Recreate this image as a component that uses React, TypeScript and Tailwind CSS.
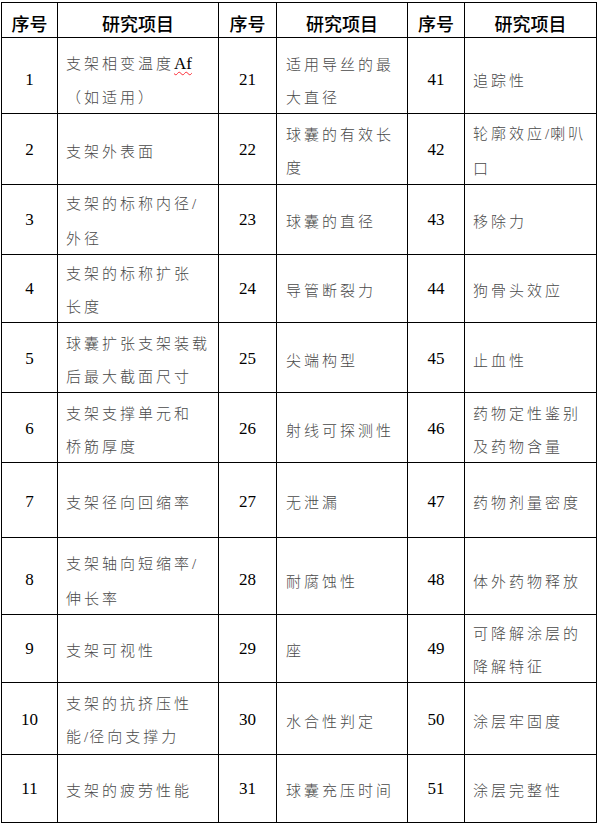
import React from "react";

type Item = { no: number; lines: React.ReactNode[] };
type Row = { h: string; cells: [Item, Item, Item] };

const cjk = "font-['Noto_Sans_CJK_SC',sans-serif]";
const cols = "grid grid-cols-[56px_161px_58px_131px_57px_132px]";

// narrow slash as in the source document
const S = () => <span className="font-['Liberation_Serif',serif] tracking-[1px]">/</span>;

const rows: Row[] = [
  {
    h: "h-[70px]",
    cells: [
      {
        no: 1,
        lines: [
          <>
            支架相变温度
            <span className="font-['Liberation_Serif',serif] text-[17px] tracking-normal text-black underline decoration-wavy decoration-red-500 decoration-1 underline-offset-2">
              Af
            </span>
          </>,
          "（如适用）",
        ],
      },
      { no: 21, lines: ["适用导丝的最", "大直径"] },
      { no: 41, lines: ["追踪性"] },
    ],
  },
  {
    h: "h-[70px]",
    cells: [
      { no: 2, lines: ["支架外表面"] },
      { no: 22, lines: ["球囊的有效长", "度"] },
      { no: 42, lines: [<>轮廓效应<S />喇叭</>, "口"] },
    ],
  },
  {
    h: "h-[70px]",
    cells: [
      { no: 3, lines: [<>支架的标称内径<S /></>, "外径"] },
      { no: 23, lines: ["球囊的直径"] },
      { no: 43, lines: ["移除力"] },
    ],
  },
  {
    h: "h-[70px]",
    cells: [
      { no: 4, lines: ["支架的标称扩张", "长度"] },
      { no: 24, lines: ["导管断裂力"] },
      { no: 44, lines: ["狗骨头效应"] },
    ],
  },
  {
    h: "h-[70px]",
    cells: [
      { no: 5, lines: ["球囊扩张支架装载", "后最大截面尺寸"] },
      { no: 25, lines: ["尖端构型"] },
      { no: 45, lines: ["止血性"] },
    ],
  },
  {
    h: "h-[70px]",
    cells: [
      { no: 6, lines: ["支架支撑单元和", "桥筋厚度"] },
      { no: 26, lines: ["射线可探测性"] },
      { no: 46, lines: ["药物定性鉴别", "及药物含量"] },
    ],
  },
  {
    h: "h-[80px]",
    cells: [
      { no: 7, lines: ["支架径向回缩率"] },
      { no: 27, lines: ["无泄漏"] },
      { no: 47, lines: ["药物剂量密度"] },
    ],
  },
  {
    h: "h-[70px]",
    cells: [
      { no: 8, lines: [<>支架轴向短缩率<S /></>, "伸长率"] },
      { no: 28, lines: ["耐腐蚀性"] },
      { no: 48, lines: ["体外药物释放"] },
    ],
  },
  {
    h: "h-[70px]",
    cells: [
      { no: 9, lines: ["支架可视性"] },
      { no: 29, lines: ["座"] },
      { no: 49, lines: ["可降解涂层的", "降解特征"] },
    ],
  },
  {
    h: "h-[70px]",
    cells: [
      { no: 10, lines: ["支架的抗挤压性", <>能<S />径向支撑力</>] },
      { no: 30, lines: ["水合性判定"] },
      { no: 50, lines: ["涂层牢固度"] },
    ],
  },
  {
    h: "h-[75px]",
    cells: [
      { no: 11, lines: ["支架的疲劳性能"] },
      { no: 31, lines: ["球囊充压时间"] },
      { no: 51, lines: ["涂层完整性"] },
    ],
  },
];

function NoCell({ n }: { n: number }) {
  return (
    <div className="border-r border-b border-black flex items-center justify-center pt-[8px] font-['Liberation_Serif',serif] text-[17px] text-black">
      {n}
    </div>
  );
}

function TextCell({ lines, pl }: { lines: React.ReactNode[]; pl: string }) {
  return (
    <div className={`border-r border-b border-black flex flex-col justify-center pt-[8px] ${pl} ${cjk} font-light text-[15px] leading-[33px] tracking-[3px] text-[#4a4a4a] whitespace-nowrap`}>
      {lines.map((l, i) => (
        <div key={i}>{l}</div>
      ))}
    </div>
  );
}

export default function App() {
  const head = ["序号", "研究项目", "序号", "研究项目", "序号", "研究项目"];
  return (
    <div className="w-[598px] h-[825px] bg-white pt-[2px] pl-[1px]">
      <div className="w-[596px] flex flex-col border-l border-t border-black">
        <div className={`${cols} h-[35px]`}>
          {head.map((t, i) => (
            <div
              key={i}
              className={`border-r border-b border-black flex items-center justify-center pt-[6px] ${cjk} font-medium text-[18px] text-black`}
            >
              {t}
            </div>
          ))}
        </div>
        {rows.map((r, ri) => (
          <div key={ri} className={`${cols} ${r.h}`}>
            {r.cells.map((c, ci) => (
              <React.Fragment key={ci}>
                <NoCell n={c.no} />
                <TextCell lines={c.lines} pl={ci === 1 ? "pl-[9px]" : "pl-[8px]"} />
              </React.Fragment>
            ))}
          </div>
        ))}
      </div>
    </div>
  );
}
